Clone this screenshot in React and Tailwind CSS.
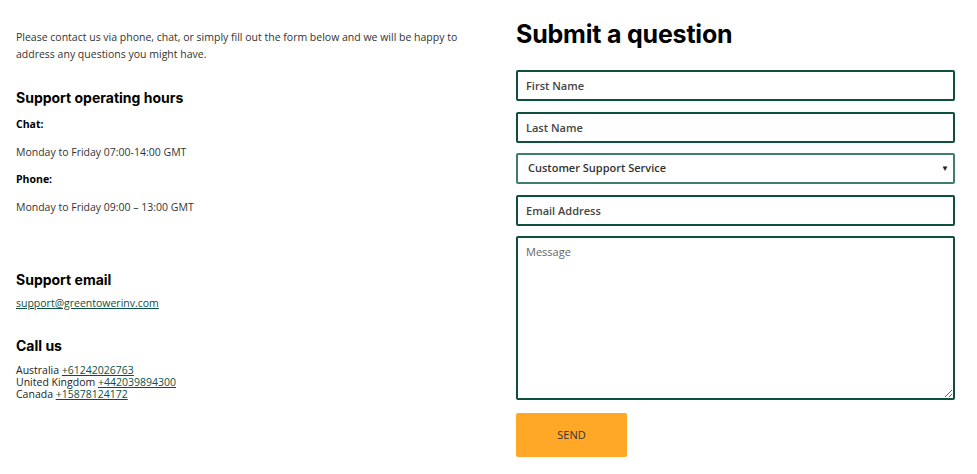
import { useState } from 'react';

const body = "font-['Open_Sans',sans-serif]";
const head = "font-['Inter',sans-serif] font-bold text-black";

function Field({ placeholder }) {
  return (
    <input
      type="text"
      placeholder={placeholder}
      className={`${body} h-[31px] w-full rounded-[2px] border-2 border-[#0f4f3f] px-[8px] text-[11px] font-semibold text-[#333] placeholder:text-[#444] outline-none`}
    />
  );
}

export default function App() {
  const [topic, setTopic] = useState('support');

  return (
    <div className={`${body} flex w-[977px] h-[474px] bg-white pl-4 pr-[22px] text-[#222]`}>
      {/* Info column */}
      <div className="w-[460px] pt-[29px]">
        <p className="text-[10.5px] leading-[17px] text-[#333]">
          Please contact us via phone, chat, or simply fill out the form below and we will be happy to address any questions you might have.
        </p>

        <h3 className={`${head} mt-[25px] text-[14px] leading-[20px]`}>Support operating hours</h3>
        <p className="mt-[8px] text-[10.5px] font-bold leading-[17px] text-black">Chat:</p>
        <p className="mt-[11px] text-[10.5px] leading-[17px] text-[#333]">Monday to Friday 07:00-14:00 GMT</p>
        <p className="mt-[10px] text-[10.5px] font-bold leading-[17px] text-black">Phone:</p>
        <p className="mt-[11px] text-[10.5px] leading-[17px] text-[#333]">Monday to Friday 09:00 – 13:00 GMT</p>

        <h3 className={`${head} mt-[54px] text-[14px] leading-[20px]`}>Support email</h3>
        <a href="#" className="mt-[5px] block text-[10.5px] leading-[17px] text-[#0c4f43] underline">
          support@greentowerinv.com
        </a>

        <h3 className={`${head} mt-[24px] text-[14px] leading-[20px]`}>Call us</h3>
        <div className="mt-[8px] text-[10.5px] leading-[12px] text-[#222]">
          <div>Australia <a href="#" className="text-[#0c4f43] underline">+61242026763</a></div>
          <div>United Kingdom <a href="#" className="text-[#0c4f43] underline">+442039894300</a></div>
          <div>Canada <a href="#" className="text-[#0c4f43] underline">+15878124172</a></div>
        </div>
      </div>

      {/* Form column */}
      <div className="ml-auto w-[439px] pt-[18px]">
        <h2 className={`${head} text-[25px] leading-[32px] tracking-[-0.2px]`}>Submit a question</h2>
        <form className="mt-[20px] flex flex-col gap-[10.5px]" onSubmit={e => e.preventDefault()}>
          <Field placeholder="First Name" />
          <Field placeholder="Last Name" />
          <div className="relative">
            <select
              value={topic}
              onChange={e => setTopic(e.target.value)}
              className={`${body} h-[31px] w-full appearance-none rounded-[2px] border-2 border-[#3f7d6d] bg-white px-[10px] text-[11px] font-semibold text-[#333] outline-none`}
            >
              <option value="support">Customer Support Service</option>
              <option value="sales">Sales</option>
            </select>
            <span className="pointer-events-none absolute right-[6px] top-[9px] text-[8px] text-[#222]">▼</span>
          </div>
          <Field placeholder="Email Address" />
          <textarea
            placeholder="Message"
            className={`${body} h-[164px] w-full rounded-[2px] border-2 border-[#0f4f3f] px-[8px] py-[6px] text-[11px] text-[#333] placeholder:text-[#666] outline-none`}
          />
          <button
            type="submit"
            className="mt-[2.5px] h-[44px] w-[111px] rounded-[2px] bg-[#ffa726] text-[11px] text-[#333]"
          >
            SEND
          </button>
        </form>
      </div>
    </div>
  );
}
